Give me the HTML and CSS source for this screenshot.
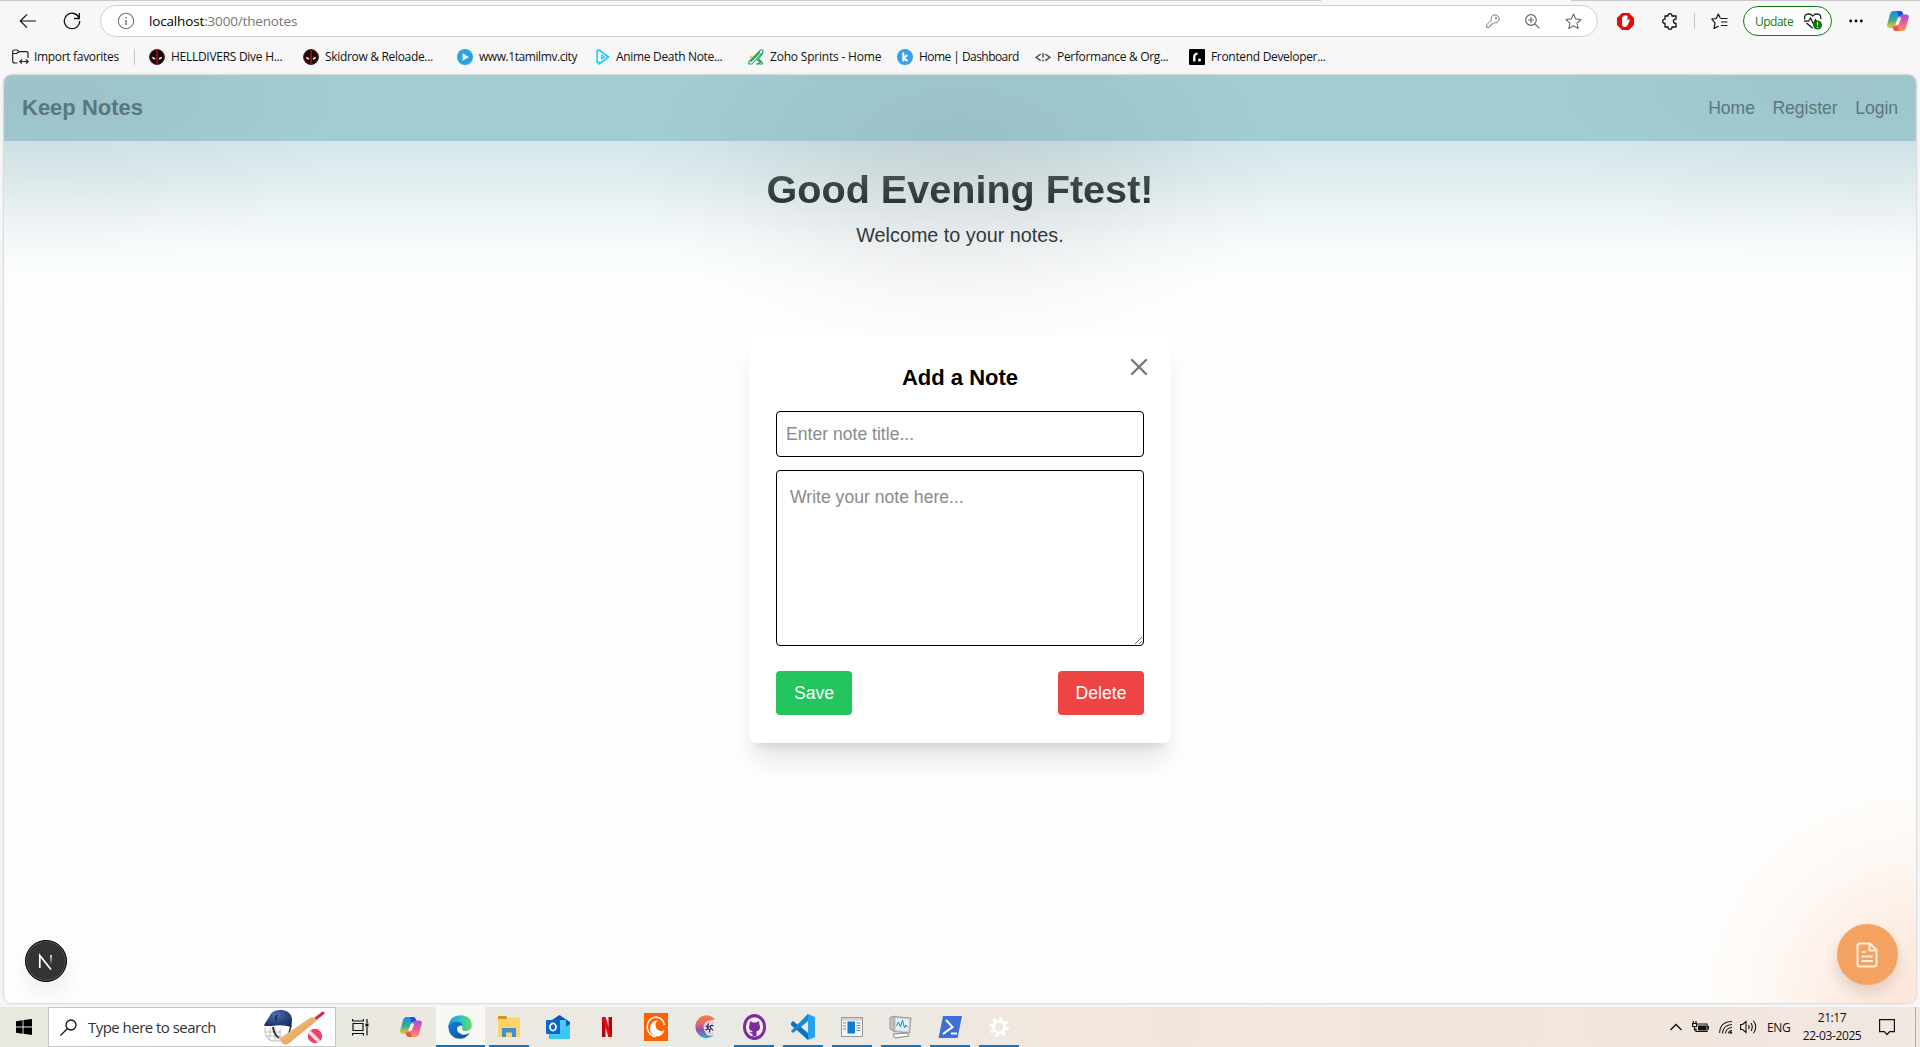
FILE: index.html
```html
<!DOCTYPE html>
<html lang="en">
<head>
<meta charset="utf-8">
<title>Keep Notes</title>
<link rel="stylesheet" href="styles.css">
</head>
<body>
<svg width="0" height="0" class="defs">
  <defs>
    <linearGradient id="cpA" x1="0" y1="0" x2="0" y2="1"><stop offset="0" stop-color="#1b8fe8"/><stop offset=".5" stop-color="#35a79a"/><stop offset="1" stop-color="#f5cc1b"/></linearGradient>
    <linearGradient id="cpB" x1="0" y1="0" x2="0" y2="1"><stop offset="0" stop-color="#a24be8"/><stop offset=".5" stop-color="#ee5a9b"/><stop offset="1" stop-color="#fb9a52"/></linearGradient>
    <linearGradient id="edA" x1="0" y1="0" x2="1" y2="0"><stop offset="0" stop-color="#1c9ddb"/><stop offset=".5" stop-color="#2fc1cf"/><stop offset="1" stop-color="#64dd50"/></linearGradient>
    <linearGradient id="edB" x1="0" y1="0" x2="1" y2="1"><stop offset="0" stop-color="#0f7fd8"/><stop offset="1" stop-color="#0a4f9e"/></linearGradient>
    <linearGradient id="arc" x1="0" y1="0" x2="0" y2="1"><stop offset="0" stop-color="#f5803e"/><stop offset=".35" stop-color="#e46a6c"/><stop offset=".65" stop-color="#8f4fb0"/><stop offset="1" stop-color="#2bb5c4"/></linearGradient>
    <linearGradient id="bat" x1="0" y1="0" x2="1" y2="1"><stop offset="0" stop-color="#f9cf90"/><stop offset="1" stop-color="#dc9044"/></linearGradient>
    <linearGradient id="nx" gradientUnits="userSpaceOnUse" x1="0" y1="15" x2="0" y2="25"><stop offset="0" stop-color="#fff"/><stop offset="1" stop-color="#fff" stop-opacity="0"/></linearGradient>
    <radialGradient id="hel" cx=".4" cy=".3" r=".7"><stop offset="0" stop-color="#4d6bb5"/><stop offset="1" stop-color="#1b2c66"/></radialGradient>
    <symbol id="copilot" viewBox="0 0 22 20">
      <path d="M6.500 0H13q2 0 2.700 2l.7 2.500h-2.200q-1.800 0-2.400 1.800L9 14.500Q8 17 6 17H3q-4 0-2.700-4L3 3Q4 0 6.500 0Z" fill="url(#cpA)"/>
      <path d="M10 0h3q2 0 2.700 2l.7 2.500h-2.200q-1.700 0-2.400 1.600Z" fill="#1853c9"/>
      <path d="M15.500 20H9q-2 0-2.700-2l-.6-2.500h2q1.800 0 2.400-1.800L13 5.500Q14 3.500 16 3.500h3q3.500 0 2.700 3.500L19 17q-1 3-3.500 3Z" fill="url(#cpB)"/>
      <path d="M12 20H9q-2 0-2.700-2l-.8-2.500h2.300q1.700 0 2.400-1.600Z" fill="#ef5440"/>
      <path d="M10.700 6.700h3.600l-2.600 7H8.200Z" fill="#f6f6f8"/>
    </symbol>
    <symbol id="mask" viewBox="0 0 16 16">
      <circle cx="8" cy="8" r="7.700" fill="#150808"/><path d="M7.200.5h1.600v15H7.200z" fill="#a0121c"/><circle cx="8" cy="8" r="7.200" fill="none" stroke="#5d1218"/>
      <path d="M2.800 7.800l3.200 1.200.2 1.500q-2.800.3-3.400-2.700Zm10.400 0-3.200 1.200-.2 1.500q2.800.3 3.400-2.700Z" fill="#fff"/>
    </symbol>
  </defs>
</svg>

<header class="browser">
  <div class="edge-line"><i class="edge-left"></i><i class="edge-right"></i></div>
  <div class="toolbar">
    <svg class="back" width="18" height="16" viewBox="0 0 18 16" fill="none" stroke="#111" stroke-width="1.200"><path d="M17 8H1.500M8 1.300 1.300 8 8 14.700"/></svg>
    <svg class="reload" width="18" height="18" viewBox="0 0 18 18" fill="none" stroke="#111" stroke-width="1.300"><path d="M16.300 6.500A7.700 7.700 0 1 0 16.700 9M16.300 1v5.500H11"/></svg>
    <div class="address">
      <svg width="18" height="18" viewBox="0 0 18 18" fill="none" stroke="#767676" stroke-width="1.100"><circle cx="9" cy="9" r="7.700"/><path d="M9 8v5M9 5v1.600" stroke-width="1.500"/></svg>
      <span class="url"><b>localhost</b>:3000/thenotes</span>
      <span class="address-icons">
        <svg width="14" height="14" viewBox="0 0 14 14" fill="none" stroke="#777" stroke-width="1"><path d="M5.300 6.200A4 4 0 1 1 7.800 8.700L6.800 9.800H5.500v1.400H4.200v1.300l-.9.900H.7v-2.600Z"/><circle cx="10" cy="4" r=".7"/></svg>
        <svg width="15" height="15" viewBox="0 0 15 15" fill="none" stroke="#6a6a6a" stroke-width="1.200"><circle cx="6" cy="6" r="5.300"/><path d="m10 10 4.300 4.300M6 3v6M3 6h6"/></svg>
        <svg width="17" height="17" viewBox="0 0 17 17" fill="none" stroke="#6a6a6a" stroke-width="1.100" stroke-linejoin="round"><path d="m8.500 1 2.200 4.900 5.300.6-4 3.600 1.200 5.400-4.700-2.800-4.700 2.800L5 10.100 1 6.500l5.300-.6Z"/></svg>
      </span>
    </div>
    <svg class="adblock" width="17" height="17" viewBox="0 0 17 17"><path d="M5 0h7l5 5v7l-5 5H5l-5-5V5Z" fill="#e40d0d"/><path d="M5 8.500V4.200q.8-.9 1.300 0V3q.8-.9 1.400 0v-.6q.8-.9 1.500 0V3q.8-.8 1.400 0v5l1-1.400q.9-.6 1.300.2L10.800 12q-.8 2-3 2Q5 14 5 11Z" fill="#fff"/></svg>
    <svg class="puzzle" width="16" height="17" viewBox="0 0 16 17" fill="none" stroke="#111" stroke-width="1.300" stroke-linejoin="round"><path d="M3 3h3q0-2.300 2-2.300T10 3h4v3.200q-2.600 0-2.600 2.100T14 10.500V14h-4q0 2.300-2 2.300T6 14H3v-3.500Q.7 10.400.7 8.300T3 6.200Z"/></svg>
    <i class="rule"></i>
    <svg class="favs" width="17" height="17" viewBox="0 0 17 17" fill="none" stroke="#111" stroke-width="1.200" stroke-linejoin="round"><path d="M9.200 5 7.300 1 5.300 5.500.8 6.200 4 9.800l-.9 5.700 4.500-2.600M9.500 5.500h7M10 9h6.500M10 12.500h6.500"/></svg>
    <div class="update"><span>Update</span>
      <svg width="18" height="17" viewBox="0 0 18 17" fill="none" stroke="#111" stroke-width="1.200"><path d="M.8 6.500Q-.2 1 4.500.8 7 .8 8.700 3 10.400.8 13 .8q4.300.2 3.700 5.200M2.500 10l6 5.300M0 8.200h4.500L6.500 5l3 6 2-4.200 1 1.600"/><circle cx="13.500" cy="12" r="4.500" fill="#0e7a0d" stroke="none"/><path d="M13.500 9.300v3.200M13.500 13.700v1.200" stroke="#fff"/></svg>
    </div>
    <svg class="dots" width="14" height="4" viewBox="0 0 14 4"><circle cx="1.700" cy="2" r="1.400"/><circle cx="7" cy="2" r="1.400"/><circle cx="12.300" cy="2" r="1.400"/></svg>
    <svg class="pilot" width="22" height="20"><use href="#copilot"/></svg>
  </div>
  <nav class="bookmarks">
    <div class="bm bm-import"><svg width="17" height="16" viewBox="0 0 17 16" fill="none" stroke="#222" stroke-width="1.200"><path d="M5.500 14H2.700Q.7 14 .7 12V2.700Q.7 1 2.500 1h2.700L7 2.700h7Q16 2.700 16 4.500V9M.7 4.500h4L7 2.700M8 12.500h8M10 10.300 7.800 12.500l2.200 2.200M14 10.300l2.200 2.200-2.200 2.200"/></svg><span>Import favorites</span><i class="rule"></i></div>
    <div class="bm bm-hell"><svg width="16" height="16"><use href="#mask"/></svg><span>HELLDIVERS Dive H...</span></div>
    <div class="bm bm-skid"><svg width="16" height="16"><use href="#mask"/></svg><span>Skidrow &amp; Reloade...</span></div>
    <div class="bm bm-tamil"><svg width="16" height="16" viewBox="0 0 16 16"><circle cx="8" cy="8" r="8" fill="#28a5dd"/><path d="M5.500 4.300v7.400L12 8Z" fill="#f3f0e6"/></svg><span>www.1tamilmv.city</span></div>
    <div class="bm bm-anime"><svg width="14" height="16" viewBox="0 0 14 16" fill="none" stroke="#22cdf2" stroke-width="1.700" stroke-linejoin="round"><path d="M3 12.500V15L12.500 8 3 1 1.200 1.500v12.700"/><path d="M5.500 6v4l3-2Z" stroke-width="1.200"/></svg><span>Anime Death Note...</span></div>
    <div class="bm bm-zoho"><svg width="16" height="16" viewBox="0 0 16 16" fill="none" stroke="#23a45f" stroke-width="1.100" stroke-linejoin="round"><path d="M.8 13 12.500 1h2.300L15 3 4 15H.8ZM3 12.500l9-9M15 4l-4.500 6 3.500 3 .5 2H8.500l4-1.500L8.500 10"/><path d="m2 9 2.500-2.500" stroke="#f4b732" stroke-width="1.500"/></svg><span>Zoho Sprints - Home</span></div>
    <div class="bm bm-home"><svg width="16" height="16" viewBox="0 0 16 16"><circle cx="8" cy="8" r="8" fill="#36a0e8"/><path d="M6.300 3.500v8.700M10.300 6 7 9l3.500 3.200" fill="none" stroke="#fff" stroke-width="2"/></svg><span>Home | Dashboard</span></div>
    <div class="bm bm-perf"><svg width="16" height="16" viewBox="0 0 16 16" fill="none" stroke="#4a4d59" stroke-width="1.400"><path d="M5.800 5 1 8.300l4.800 3.300M10.200 5 15 8.300l-4.800 3.300M8 4v4.800M8 10.500v2"/></svg><span>Performance &amp; Org...</span></div>
    <div class="bm bm-front"><svg width="16" height="16" viewBox="0 0 16 16"><rect width="16" height="16" rx="1" fill="#000"/><path d="M5.300 12.500V7.300Q5.300 5 8.500 4.700" fill="none" stroke="#fff" stroke-width="2.300"/><circle cx="10.500" cy="11" r="1.500" fill="#fff"/></svg><span>Frontend Developer...</span></div>
  </nav>
</header>

<main class="page">
  <nav class="site-nav">
    <strong>Keep Notes</strong>
    <div class="links"><a>Home</a><a>Register</a><a>Login</a></div>
  </nav>
  <h1>Good Evening Ftest!</h1>
  <p class="welcome">Welcome to your notes.</p>

  <section class="note">
    <svg class="close" width="18" height="18" viewBox="0 0 18 18" fill="none" stroke="#6b7280" stroke-width="2.200" stroke-linecap="round"><path d="m2 2 14 14M16 2 2 16"/></svg>
    <h2>Add a Note</h2>
    <input type="text" placeholder="Enter note title...">
    <textarea placeholder="Write your note here..."></textarea>
    <div class="actions"><button class="save">Save</button><button class="delete">Delete</button></div>
  </section>

  <div class="next-badge"><svg width="42" height="42" viewBox="0 0 42 42" fill="none"><path d="M14.800 28V15.500L26 29.500" stroke="#fff" stroke-width="1.700"/><path d="M25.200 15h1.600v10h-1.600z" fill="url(#nx)"/></svg></div>
  <div class="fab"><svg width="22" height="26" viewBox="0 0 22 26" fill="none" stroke="#fdeee0" stroke-width="2" stroke-linejoin="round" stroke-linecap="round"><path d="M14 1.500H4Q1.500 1.500 1.500 4v18q0 2.500 2.500 2.500h14q2.500 0 2.500-2.500V8ZM13.500 1.500V8.500h7M6.500 10h2.500M6.500 14.500h9.500M6.500 19h9.500"/></svg></div>
</main>

<footer class="taskbar">
  <div class="start"><svg width="16" height="16" viewBox="0 0 16 16"><path d="M0 2.200 6.600 1.300V7.500H0ZM7.500 1.100 16 0v7.500H7.500ZM0 8.500h6.600v6.200L0 13.800ZM7.500 8.500H16V16l-8.500-1.200Z"/></svg></div>
  <div class="search">
    <svg width="17" height="17" viewBox="0 0 17 17" fill="none" stroke="#111" stroke-width="1.300"><circle cx="11" cy="6" r="5"/><path d="M7.500 9.500.5 16.500"/></svg>
    <span>Type here to search</span>
    <svg class="cricket" width="62" height="36" viewBox="0 0 62 36">
      <g fill="none" stroke="#b9bcc2" stroke-width="1"><path d="M2 19q-1 6 3 11 8 5 17-1M2 23h16M3 27h15M7 19v12M12 19v13M17 20v12"/></g>
      <path d="M10 18q1 8 6 11" fill="none" stroke="#333" stroke-width="2"/>
      <path d="M1 16Q3 13 6 8 9 0 19 1q9 1 10 9l-.5 8q-8-2.500-16-1.500-5 .7-10.500.5Z" fill="url(#hel)"/>
      <path d="M14 6q-2 3-1 6M28 17l-3 10" fill="none" stroke="#1b2440" stroke-width="1.400"/>
      <path d="m51 11 9-7" stroke="#c92f48" stroke-width="3" stroke-linecap="round"/>
      <path d="M17 29 47 9q4-2 6 1 1 2-2 4L25 35q-3 2-6-1-3-3-2-5Z" fill="url(#bat)"/>
      <circle cx="52" cy="27" r="7.200" fill="#ee4265"/><path d="M46.500 23 56 32.500" stroke="#f8dfe3" stroke-width="3.500"/>
    </svg>
  </div>
  <div class="apps">
    <div class="app"><svg width="17" height="17" viewBox="0 0 17 17" fill="none" stroke="#111" stroke-width="1.200"><path d="M1 4.500h10v7H1ZM.6 0v2h10.800V0M.6 16.500v-2h10.800v2M15 0v4M15 8v8.500"/><path d="M13.500 4.500h3v3h-3z" fill="#111" stroke="none"/></svg></div>
    <div class="app"><svg width="22" height="20"><use href="#copilot"/></svg></div>
    <div class="app current open"><svg width="24" height="24" viewBox="0 0 24 24"><path d="M.5 10.500Q2 .5 12.500.2 23 .5 23.800 10q.2 6-6.300 6-4-.2-3.200-2.600.7-5.900-5.300-6.200Q3.500 7 .5 10.500Z" fill="url(#edA)"/><path d="M.3 10.500Q3 6.500 8.500 6.700q5.500.3 6.200 4-4.200-1-5.700 2.300Q8.500 17.500 14 19.500q4 1 8-2-3.500 6.300-10.500 6.300Q1 23 .3 12Z" fill="url(#edB)"/></svg></div>
    <div class="app open"><svg width="22" height="22" viewBox="0 0 22 22"><path d="M0 0h8l2 3H0Z" fill="#d9970e"/><path d="M0 3h10l1-1.500h11V21H0Z" fill="#fdd365"/><path d="M4 21v-9h14v9h-4v-4.500H8V21Z" fill="#3f8fd2"/></svg></div>
    <div class="app"><svg width="24" height="26" viewBox="0 0 24 26"><path d="m3 8 10.500-7L24 8v15q0 2-2 2H5q-2 0-2-2Z" fill="#0a58b8"/><path d="M7 6h13v10H7Z" fill="#57c5f4"/><path d="M24 10 12 18H3v5q0 2 2 2h17q2 0 2-2Z" fill="#38c9ee"/><rect y="6" width="14" height="14" rx="1" fill="#0a66cc"/><ellipse cx="7" cy="13" rx="3" ry="3.600" fill="none" stroke="#fff" stroke-width="1.800"/></svg></div>
    <div class="app"><svg width="10" height="20" viewBox="0 0 10 20"><path d="M0 0h3.500v20H0zM6.500 0H10v20H6.500z" fill="#b1060f"/><path d="M0 0h3.500L10 20H6.500Z" fill="#e50914"/></svg></div>
    <div class="app"><svg width="24" height="28" viewBox="0 0 24 28"><path d="M0 0h24v28H0z" fill="#fd6102"/><path d="M20.500 12A8.700 9.700 0 1 0 12 23.500" fill="none" stroke="#fff" stroke-width="1.600"/><path d="M14 7.500a7.300 8 0 1 0 6.500 9.500 4.500 4.500 0 1 1-6.500-9.500Z" fill="#fff"/></svg></div>
    <div class="app"><svg width="22" height="24" viewBox="0 0 22 24"><path d="M21 4.500A11 11.500 0 1 0 20 20q-7 2.500-9-3.500Q9 8 14 6.500q4-2 7-2Z" fill="url(#arc)"/><path d="M20 5.500Q9 4 9.500 13.500 11 20 19 19.500Z" fill="#eec6cc"/><circle cx="15.500" cy="13" r="5" fill="#eceaf0"/><g fill="none" stroke="#242466" stroke-width="1.200"><circle cx="15.300" cy="13" r="1.500"/><path d="M15 8.500q-2 1.500-1 3.300M19.500 11q-2-1.300-3.500.5M19 15.500q-1-2-2.500-2M15 17.500q1.500-1.500.5-3M11.300 14.500q1.500.8 2.700-.8M12 10.500q0 1.800 2 2"/></g></svg></div>
    <div class="app open"><svg width="23" height="26" viewBox="0 0 23 26"><ellipse cx="11.500" cy="13" rx="11.500" ry="13" fill="#7a2ca0"/><ellipse cx="11.500" cy="13" rx="8.600" ry="9.800" fill="#f8f5fa"/><path d="m7 7 3 1.500h3L16 7l.4 3.300q2.200 6.200-2.900 7v5h-4v-2.500q-2.600 0-3.500-2.500 2 1.500 3.500.6v-.6q-5-.8-2.900-7Z" fill="#7a2ca0"/></svg></div>
    <div class="app open"><svg width="24" height="26" viewBox="0 0 24 26"><path d="m17 0 7 3v20l-7 3L5 13Z" fill="#27a2ef"/><path d="M0 9 2 7l15 12v7L0 11Z" fill="#0b73be"/><path d="M0 17 17 0v7L2 19Z" fill="#1687d3"/><path d="m17 7-7 6 7 6Z" fill="#ebe9e2"/></svg></div>
    <div class="app open"><svg width="22" height="20" viewBox="0 0 22 20"><path d="M.5.5h21v19H.5z" fill="#f4f4f4" stroke="#999"/><path d="M1 1h20v2.500H1z" fill="#d2d2d2"/><path d="M6.500 4.500H14v12H6.500z" fill="#0c7bd0"/><path d="M2 6h3M2 9h3M2 12h3M15.500 6h4M15.500 8.500h4M15.500 11h4M15.500 13.500h4" stroke="#888"/></svg></div>
    <div class="app open"><svg width="24" height="24" viewBox="0 0 24 24"><path d="M1 2.500 6 1v16l-5-3Z" fill="#c2c2bf" stroke="#999"/><path d="M5 1.500 22 3l-1.500 15L5 16.500Z" fill="#d4d4d2" stroke="#999"/><path d="m7 3.500 13 1-1 11.500-12-1Z" fill="#dff1fb"/><path d="m7.500 11 2-4 2 5 2-7 2 8 1.500-3 1.500 2" fill="none" stroke="#2c83bd"/><path d="m4 19 14-1 2 3-14 2Z" fill="#fafafa" stroke="#888"/></svg></div>
    <div class="app open"><svg width="24" height="22" viewBox="0 0 24 22"><path d="M5 0h19l-4.500 22H.5Z" fill="#3e6fd9"/><path d="m8 4 6.500 7L5 18M13 17.500h6" fill="none" stroke="#fff" stroke-width="2"/></svg></div>
    <div class="app open"><svg width="20" height="22" viewBox="0 0 20 22" fill="none" stroke="#fff"><circle cx="10" cy="11" r="5.700" stroke-width="2.500"/><circle cx="10" cy="11" r="8" stroke-width="3.500" stroke-dasharray="3 3.283"/></svg></div>
  </div>
  <div class="tray">
    <svg class="chev" width="12" height="8" viewBox="0 0 12 8" fill="none" stroke="#111" stroke-width="1.300"><path d="m.5 7 5.500-5.500L11.500 7"/></svg>
    <svg class="batt" width="17" height="12" viewBox="0 0 17 12" fill="none" stroke="#111" stroke-width="1.200"><path d="M5.500 3H15v7.500H4V7.500M15 5.500h1.500v3M1.300 0v2.500M4 0v2.500M.6 2.500h4v3h-4zM2.500 5.500V9H4"/><path d="M6 4.500h8V9.500H6z" fill="#111" stroke="none"/></svg>
    <svg class="wifi" width="14" height="14" viewBox="0 0 14 14" fill="none" stroke="#222" stroke-width="1.100"><path d="M.6 13Q1 1.700 13 1.500M3.500 13.500Q4 5 13 4.500M6.500 13.500Q7 8 13 7.500M9.500 13.500q0-3 3.500-3"/><circle cx="11.800" cy="12.500" r="1.300" fill="#111" stroke="none"/></svg>
    <svg class="sound" width="17" height="16" viewBox="0 0 17 16" fill="none" stroke="#111" stroke-width="1.100"><path d="M.6 5.500h2L6 2.500v11l-3.400-3h-2ZM8.500 6q1.300 2 0 4M11 4q2.500 4 0 8M13.500 1.800q4.500 6.200 0 12.400"/></svg>
    <span class="lang">ENG</span>
    <div class="clock"><span>21:17</span><span class="date">22-03-2025</span></div>
    <svg class="notif" width="16" height="17" viewBox="0 0 16 17" fill="none" stroke="#111" stroke-width="1.200"><path d="M.6.6h14.800v12h-4.700L8 15.500 5.300 12.600H.6Z"/></svg>
  </div>
</footer>
</body>
</html>
```
FILE: styles.css
```css
* { box-sizing: border-box; }
body {
  margin: 0; width: 1920px; height: 1047px; overflow: hidden;
  display: flex; flex-direction: column; background: #f7f7f7;
  font-family: "Open Sans", "Noto Sans", sans-serif; color: #111;
}
svg { display: block; flex: none; }
.defs { position: absolute; }

/* Browser chrome */
.browser { height: 75px; flex: none; }
.edge-line { display: flex; justify-content: space-between; height: 1px; }
.edge-line i { background: #c9c9c9; }
.edge-left { width: 1321px; }
.edge-right { width: 349px; }
.toolbar { display: flex; align-items: center; height: 40px; padding-left: 19px; }
.reload { margin-left: 26px; }
.address {
  display: flex; align-items: center; width: 1498px; height: 32px; margin-left: 19px; padding: 0 15px 0 16px;
  background: #fff; border: 1px solid #cfcfcf; border-radius: 16px;
}
.url { margin-left: 14px; font-size: 13.500px; letter-spacing: -.16px; color: #767676; white-space: nowrap; }
.url b { font-weight: 400; color: #000; }
.address-icons { display: flex; align-items: center; gap: 25px; margin-left: auto; }
.adblock { margin-left: 19px; }
.puzzle { margin-left: 28px; }
.rule { width: 1px; height: 16px; background: #c8c8c8; }
.toolbar .rule { margin-left: 16px; }
.favs { margin-left: 16px; }
.update {
  display: flex; align-items: center; justify-content: space-between; width: 89px; height: 30px;
  margin-left: 15px; padding: 0 9px 0 11px; border: 1px solid #107c10; border-radius: 15px;
  color: #107c10; font-size: 12px; letter-spacing: -.5px; background: #fff;
}
.dots { margin-left: 17px; }
.pilot { margin-left: 24px; }
.bookmarks { display: flex; align-items: center; height: 32px; padding-left: 12px; font-size: 12px; letter-spacing: -.32px; }
.bm { display: flex; align-items: center; flex: none; gap: 6px; height: 18px; white-space: nowrap; }
.bm span { line-height: 18px; }
.bm-import { width: 137px; gap: 5px; }
.bm-import .rule { margin-left: auto; margin-right: 14px; }
.bm-hell { width: 154px; letter-spacing: -.28px; }
.bm-skid { width: 154px; }
.bm-tamil { width: 139px; letter-spacing: -.43px; }
.bm-anime { width: 152px; }
.bm-zoho { width: 149px; letter-spacing: -.2px; }
.bm-home { width: 138px; letter-spacing: -.55px; }
.bm-perf { width: 154px; }

/* Page */
.page {
  position: relative; height: 928px; width: 1912px; flex: none; margin: 0 auto;
  display: flex; flex-direction: column; align-items: center;
  border-radius: 8px; overflow: hidden; box-shadow: 0 0 2px 1px #d4d4d4;
  font-family: "Liberation Sans", Arial, sans-serif;
  background:
    radial-gradient(ellipse 340px 240px at 956px 50px, rgba(70,65,65,.13), rgba(70,65,65,.11) 25%, rgba(70,65,65,.07) 50%, rgba(70,65,65,.022) 76%, transparent),
    radial-gradient(ellipse 320px 190px at 40px 10px, rgba(70,60,60,.06), rgba(70,60,60,.03) 50%, transparent),
    radial-gradient(ellipse 320px 190px at 1860px 10px, rgba(70,60,60,.05), rgba(70,60,60,.025) 50%, transparent),
    radial-gradient(circle 270px at 1912px 928px, #fce6d8, #fdeee5 30%, #fef8f4 56%, #fefdfb 78%, transparent),
    linear-gradient(#d3e7eb 66px, #d9ebee 84px, #e1eeef 106px, #edf4f7 138px, #f7fbfc 170px, #fcfefd 200px, #fefefe 250px);
}
.site-nav {
  width: 100%; height: 66px; flex: none; display: flex; align-items: center; justify-content: space-between;
  padding: 0 18px; color: #5b777c;
  background: radial-gradient(ellipse 300px 150px at 956px 66px, rgba(80,70,70,.09), rgba(80,70,70,.04) 55%, transparent),
    radial-gradient(ellipse 280px 110px at 50px 20px, rgba(80,70,70,.07), transparent),
    radial-gradient(ellipse 300px 110px at 1850px 10px, rgba(80,70,70,.05), transparent), #a1ccd2;
}
.site-nav strong { font-size: 22px; }
.links { display: flex; gap: 17.600px; font-size: 17.600px; letter-spacing: -.05px; }
h1 {
  margin: 23px 0 0; font-size: 39.600px; line-height: 50px; white-space: nowrap;
  background: linear-gradient(#445255 20%, #2c3235 80%); background-clip: text; color: transparent;
}
.welcome { margin: 7px 0 0; font-size: 19.800px; line-height: 28px; color: #33393b; }

/* Note dialog */
.note {
  position: absolute; left: 745px; top: 260px; width: 422px; height: 408px; padding: 27px;
  display: flex; flex-direction: column; background: #fff; border-radius: 8px;
  box-shadow: 0 22px 28px -6px rgba(0,0,0,.11), 0 9px 11px -7px rgba(0,0,0,.12);
}
.close { position: absolute; right: 23px; top: 23px; }
h2 { margin: 0; height: 49px; padding-top: 1px; line-height: 30px; font-size: 22px; text-align: center; color: #000; }
input, textarea, button { font-family: inherit; font-size: 17.600px; }
input, textarea { width: 368px; margin: 0; border: 1px solid #000; border-radius: 4px; background: #fff; outline: 0; }
input { height: 46px; padding: 0 9px; }
textarea { height: 176px; margin-top: 13px; padding: 13px; line-height: 26px; }
::placeholder { color: #8b8b8b; opacity: 1; }
.actions { display: flex; justify-content: space-between; margin-top: 25px; }
button { height: 44px; padding: 0; border: 0; border-radius: 4px; color: #fff; }
.save { width: 76px; background: #22c55e; }
.delete { width: 86px; background: #ef4444; }

.next-badge {
  position: absolute; left: 21px; top: 865px; width: 42px; height: 42px; border-radius: 50%;
  background: #333; border: 1px solid #000; box-shadow: inset 0 0 0 1px #555, 0 12px 24px rgba(0,0,0,.07);
}
.next-badge svg { margin: -1px; }
.fab {
  position: absolute; left: 1833px; top: 849px; width: 61px; height: 61px; border-radius: 50%; padding-right: 1px;
  display: flex; align-items: center; justify-content: center; background: #f4a261;
  box-shadow: 0 8px 14px rgba(80,40,20,.15);
}

/* Taskbar */
.taskbar {
  display: flex; height: 40px; margin-top: 4px; flex: none;
  background: linear-gradient(90deg, #e9e8df, #ebe9e3 45%, #f1e7df 54%, #f2e5dc 75%, #f0e7e1);
}
.start { width: 48px; display: flex; align-items: center; justify-content: center; }
.search { width: 288px; display: flex; align-items: center; padding: 0 10px 0 11px; background: #fff; border: 1px solid #c6c6c6; font-size: 15px; letter-spacing: -.53px; color: #333; white-space: nowrap; }
.search span { margin-left: 11px; }
.cricket { margin-left: auto; }
.apps { display: flex; }
.app { width: 49px; height: 40px; display: flex; align-items: center; justify-content: center; position: relative; padding-right: 1px; }
.app:nth-child(2) { width: 51px; padding: 0; }
.open::after { content: ""; position: absolute; left: 4px; right: 5px; bottom: 0; height: 2px; background: #0078d4; }
.current { background: #f7f7f3; }
.current::after { left: 0; right: 0; }
.tray { display: flex; align-items: center; margin-left: auto; margin-right: 4px; padding-right: 20px; border-right: 1px solid #b5afa9; white-space: nowrap; }
.batt { margin-left: 10px; }
.wifi { margin-left: 10px; }
.sound { margin-left: 7px; }
.lang { width: 24px; margin-left: 10px; font-size: 12px; letter-spacing: -.4px; }
.clock { display: flex; flex-direction: column; align-items: center; width: 60px; margin-left: 11px; font-size: 12px; line-height: 18px; letter-spacing: -.4px; }
.notif { margin-left: 17px; }
```
